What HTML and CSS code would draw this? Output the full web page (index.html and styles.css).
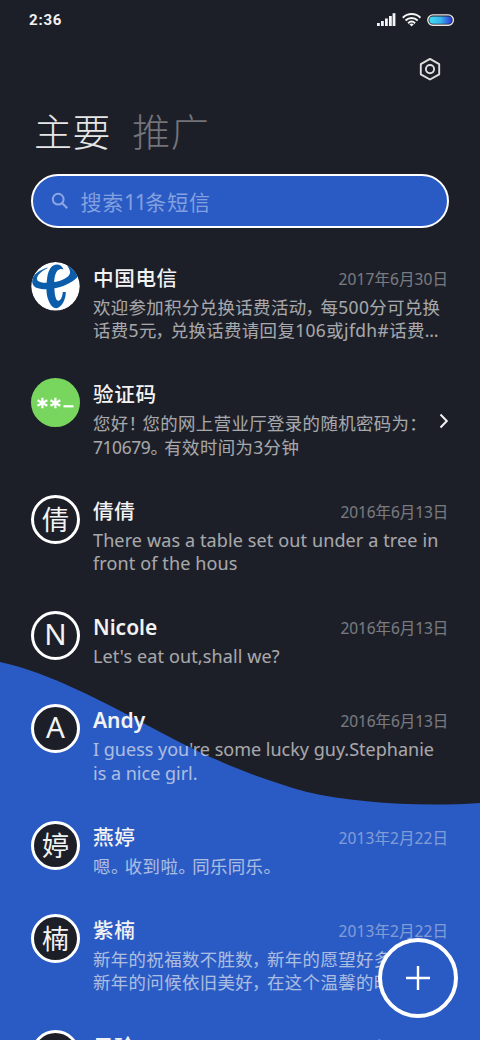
FILE: index.html
```html
<!DOCTYPE html>
<html lang="zh-CN">
<head>
<meta charset="utf-8">
<title>短信</title>
<link rel="stylesheet" href="styles.css">
</head>
<body>
<div class="screen">
  <svg class="wave" width="480" height="1040" viewBox="0 0 480 1040"><path d="M0 662C50 673 100 700 160 732C200 753 240 773 307 792C355 803 420 807 480 803V1040H0Z" fill="#2a5bc4"/></svg>
  <header class="status">
    <span class="clock">2:36</span>
    <svg width="80" height="18" viewBox="376 11 80 18">
      <g fill="#f4f4f4"><rect x="377" y="23" width="2.8" height="3"/><rect x="381" y="21" width="2.8" height="5"/><rect x="385" y="18.5" width="2.8" height="7.5"/><rect x="389" y="16" width="2.8" height="10"/><rect x="392.6" y="13.2" width="2.8" height="12.8"/></g>
      <g fill="none" stroke="#f4f4f4" stroke-width="2"><path d="M402.8 17.7C407.8 12.9 415.5 12.9 420.4 17.7"/><path d="M405.5 20.5C409 17.2 414.2 17.2 417.7 20.5"/><path d="M408.1 23.2C410.2 21.2 413 21.2 415.1 23.2"/></g>
      <path d="M409.4 24.3Q411.6 22.7 413.8 24.3L411.6 26.5Z" fill="#f4f4f4"/>
      <defs><linearGradient id="charge"><stop stop-color="#42dcef"/><stop offset=".5" stop-color="#38b6ee"/><stop offset="1" stop-color="#3038dd"/></linearGradient></defs>
      <rect x="427.8" y="14.9" width="25.6" height="10.3" rx="5.1" fill="#1d1f28" stroke="#e8e8e8" stroke-width="1.4"/>
      <rect x="429.3" y="16.4" width="22.6" height="7.3" rx="3.6" fill="url(#charge)"/>
    </svg>
  </header>
  <div class="tools">
    <svg width="24" height="24" viewBox="0 0 24 24" fill="none" stroke="#dedede" stroke-width="1.9"><path d="M12 1.9L21.2 7.1V17.3L12 22.5L2.8 17.3V7.1Z" stroke-linejoin="round"/><circle cx="12" cy="12.1" r="4.1"/></svg>
  </div>
  <nav class="tabs"><span class="tab active">主要</span><span class="tab">推广</span></nav>
  <div class="search">
    <svg width="18" height="18" viewBox="0 0 18 18" fill="none" stroke="#8ba7e2" stroke-width="2"><circle cx="7.2" cy="7.2" r="5.4"/><path d="M11.2 11.2L16.3 16.3"/></svg>
    <span>搜索<i class="eleven">11</i>条短信</span>
  </div>
  <main class="list">
    <article class="row">
      <svg class="avatar plain" viewBox="0 0 49 49"><clipPath id="disc"><circle cx="24.5" cy="24.3" r="24.2"/></clipPath><g clip-path="url(#disc)"><rect width="49" height="49" fill="#fff"/><g fill="#0b5dab"><path d="M16.5 5.6C9 8 2 12.5 1.2 18C.8 22 3 25 6 26C12 28 19 27.5 25 26C34 24 42 20 47.5 14C46 7 41 3 35 1C35.5 3.5 39.5 7 39 11C38 15.5 31 19 22 20.3C15 21.2 9 21 6.5 18.5C4.5 15 9 9.5 16.5 6.2Z"/><path d="M32.5 7.6C31 4 29 2.6 26 2.6C20.5 2.6 17.5 8 16.3 15C15.1 23 15 31 17 37C19 43 22 46.5 25.5 46.2C31.5 45 35 36 34.8 30H31.8C31.5 34 30 38.5 27.5 38.8C24.5 39 23.8 32 23.4 27C22.8 19 23.5 12 26.5 8.6C28.5 6.6 31 6.6 32.5 7.6Z"/></g></g></svg>
      <div class="body"><div class="top"><h2>中国电信</h2><time>2017年6月30日</time></div>
        <p>欢迎参加积分兑换话费活动<i class="comma">，</i>每500分可兑换<br>话费5元<i class="comma">，</i>兑换话费请回复106或jfdh#话费…</p></div>
    </article>
    <article class="row">
      <div class="avatar code"><svg width="49" height="49" viewBox="0 0 49 49" fill="none" stroke="#fff" stroke-width="2.2"><path d="M11.4 19.7V30.3M6.5 22.2L16.3 27.8M16.3 22.2L6.5 27.8M24.4 19.7V30.3M19.5 22.2L29.3 27.8M29.3 22.2L19.5 27.8"/><path d="M32.5 28.3H42.5"/></svg></div>
      <div class="body"><div class="top"><h2>验证码</h2></div>
        <p>您好<i class="comma">！</i>您的网上营业厅登录的随机密码为：<br><i class="digits">710679</i><i class="stop">。</i>有效时间为3分钟</p></div>
      <svg class="chevron" width="12" height="18" viewBox="0 0 12 18" fill="none" stroke="#f2f2f2" stroke-width="2"><path d="M2.5 2.5L8.8 9L2.5 15.5"/></svg>
    </article>
    <article class="row">
      <div class="avatar">倩</div>
      <div class="body"><div class="top"><h2>倩倩</h2><time class="y16">2016年6月13日</time></div>
        <p class="latin">There was a table set out under a tree in<br>front of the hous</p></div>
    </article>
    <article class="row">
      <div class="avatar letter">N</div>
      <div class="body"><div class="top"><h2 class="latin-name">Nicole</h2><time class="y16">2016年6月13日</time></div>
        <p class="latin">Let's eat out,shall we?</p></div>
    </article>
    <article class="row">
      <div class="avatar letter">A</div>
      <div class="body"><div class="top"><h2 class="latin-name">Andy</h2><time class="y16">2016年6月13日</time></div>
        <p class="latin tight">I guess you're some lucky guy.Stephanie<br>is a nice girl.</p></div>
    </article>
    <article class="row">
      <div class="avatar">婷</div>
      <div class="body"><div class="top"><h2>燕婷</h2><time>2013年2月22日</time></div>
        <p>嗯<i class="stop">。</i>收到啦<i class="stop">。</i>同乐同乐<i class="stop">。</i></p></div>
    </article>
    <article class="row">
      <div class="avatar">楠</div>
      <div class="body"><div class="top"><h2>紫楠</h2><time>2013年2月22日</time></div>
        <p>新年的祝福数不胜数<i class="comma">，</i>新年的愿望好多<br>新年的问候依旧美好<i class="comma">，</i>在这个温馨的时</p></div>
    </article>
    <article class="row">
      <div class="avatar"></div>
      <div class="body"><div class="top"><h2>子玲</h2><time>2013年2月22日</time></div></div>
    </article>
  </main>
  <div class="fab"><svg width="26" height="26" viewBox="0 0 26 26" stroke="#fff" stroke-width="2.4"><path d="M13 1V25M1 13H25"/></svg></div>
</div>
</body>
</html>
```
FILE: styles.css
```css
* { box-sizing: border-box; }
body { margin: 0; }
i { font-style: normal; }
.screen {
  position: relative;
  width: 480px;
  height: 1040px;
  overflow: hidden;
  background: #1d1f28;
  color: #f2f2f2;
  font-family: "Noto Sans", "Noto Sans CJK SC", sans-serif;
  display: flex;
  flex-direction: column;
}
.wave { position: absolute; inset: 0; }
.screen > :not(.wave):not(.fab) { position: relative; flex: none; }
.status {
  height: 40px;
  padding: 0 24px 0 29px;
  display: flex;
  align-items: center;
  justify-content: space-between;
}
.clock { font: 700 15px/20px Roboto, sans-serif; letter-spacing: .8px; }
.tools { height: 58px; padding: 17px 38px 0 0; text-align: right; }
.tabs { height: 76px; padding: 6px 0 0 34px; display: flex; gap: 21px; }
.tab { font-weight: 300; font-size: 38px; letter-spacing: .6px; line-height: 52px; color: #74757a; font-family: "Noto Sans CJK SC", sans-serif; }
.tab.active { color: #e6e6e6; }
.search {
  margin: 0 31px;
  height: 54px;
  border: 2.5px solid #fff;
  border-radius: 27px;
  background: #2a5bc4;
  color: #83a0df;
  padding-left: 18px;
  display: flex;
  align-items: center;
  gap: 11.5px;
  font-size: 21px;
  letter-spacing: .8px;
}
.eleven { letter-spacing: -1.4px; }
.list { padding: 33.5px 32px 0 31px; }
.row { display: flex; gap: 13px; padding-bottom: 35.5px; position: relative; }
.avatar {
  flex: none;
  width: 49px;
  height: 49px;
  border: 3px solid #fff;
  border-radius: 50%;
  background: #1d1f28;
  font-size: 27px;
  line-height: 43px;
  text-align: center;
}
.avatar.plain { border: 0; background: none; }
.avatar.code { border: 0; background: #78d65f; }
.letter { font-size: 29.5px; line-height: 40px; }
.body { flex: 1; min-width: 0; white-space: nowrap; }
.top { height: 34px; display: flex; justify-content: space-between; }
h2 { margin: 0; font-size: 20.6px; line-height: 32px; font-weight: 500; letter-spacing: .6px; }
.latin-name { font-size: 21px; font-weight: 600; letter-spacing: 0; }
time { font-size: 15.5px; line-height: 35px; opacity: .43; letter-spacing: .1px; margin-right: -.1px; }
.y16 { letter-spacing: -.1px; }
p { margin: 0; font-size: 17.4px; line-height: 23.5px; opacity: .65; letter-spacing: .4px; font-feature-settings: "palt"; }
.comma { letter-spacing: 5.2px; }
.stop { letter-spacing: 5.3px; }
.digits { letter-spacing: -.4px; }
.latin { font-size: 18px; letter-spacing: .12px; }
.tight { letter-spacing: 0; }
.chevron { position: absolute; right: -2px; top: 34px; }
.fab {
  position: absolute;
  left: 378px;
  top: 938px;
  width: 80px;
  height: 80px;
  border: 4px solid #fff;
  border-radius: 50%;
  background: #2a5bc4;
  display: grid;
  place-items: center;
}
```
